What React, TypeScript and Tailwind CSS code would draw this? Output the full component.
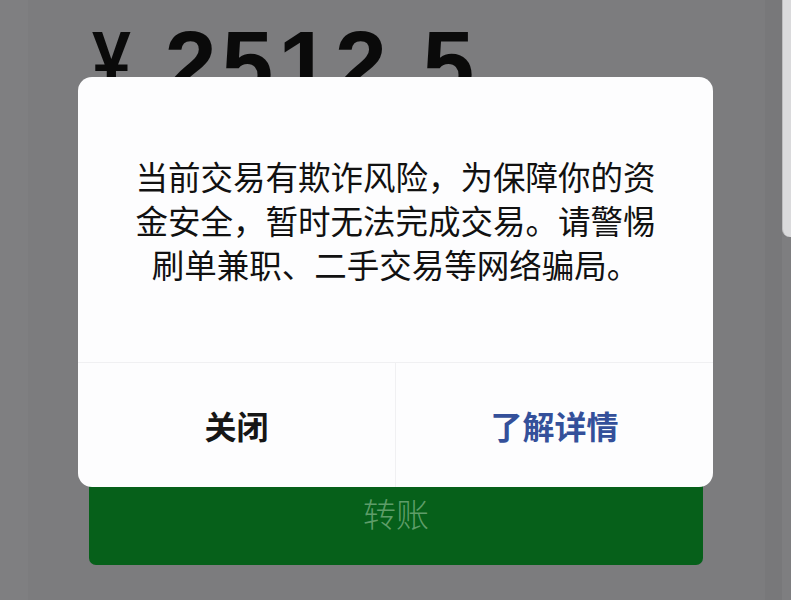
const cjk = "font-['Noto_Sans_CJK_SC','Noto_Sans',sans-serif]";

function RiskDialog() {
  return (
    <div className="absolute left-[78px] top-[77px] w-[635px] h-[410px] rounded-[14px] bg-[#fdfdfe] flex flex-col overflow-hidden">
      {/* message */}
      <div className={`h-[285px] flex flex-col items-center justify-center text-center text-[32.5px] leading-[44px] text-[#111111] ${cjk}`}>
        <p className="whitespace-nowrap">当前交易有欺诈风险，为保障你的资</p>
        <p className="whitespace-nowrap">金安全，暂时无法完成交易。请警惕</p>
        <p className="whitespace-nowrap">刷单兼职、二手交易等网络骗局。</p>
      </div>

      {/* actions */}
      <div className={`flex-1 flex border-t border-[#f0f0f2] text-[32px] font-semibold ${cjk}`}>
        <button className="flex-1 flex items-center justify-center border-r border-[#f0f0f2] text-[#161616]">
          关闭
        </button>
        <button className="flex-1 flex items-center justify-center text-[#34509a]">
          了解详情
        </button>
      </div>
    </div>
  );
}

export default function App() {
  return (
    <div className="relative w-[791px] h-[600px] overflow-hidden bg-[#7c7c7e] flex">
      <div className="w-[28px] bg-[#7f7f81]" />

      {/* transfer page behind the dialog */}
      <div className="flex-1 flex flex-col">
        <div className="pt-[18px] pl-[64px] flex items-start leading-none text-[93px] font-bold text-[#0a0a0a] font-['Liberation_Sans',Arial,sans-serif]">
          <span className="inline-block origin-left scale-x-[0.75]">¥</span>
          <span className="ml-[21px] tracking-[5px]">2512.5</span>
        </div>

        <button
          className={`mt-auto mb-[35px] ml-[61px] w-[614px] h-[95px] pb-[8px] rounded-[7px] bg-[#06601a] flex items-center justify-center text-[33px] font-light text-[#5e9d69] ${cjk}`}
        >
          转账
        </button>
      </div>

      {/* edge of the next screen */}
      <div className="w-[17px] bg-[#78787a]" />
      <div className="w-[9px] flex flex-col">
        <div className="h-[237px] rounded-bl-[8px] bg-[#dadadc] border-l border-[#bdbdbf]" />
        <div className="flex-1 bg-[#7e7e80]" />
      </div>

      <RiskDialog />
    </div>
  );
}
